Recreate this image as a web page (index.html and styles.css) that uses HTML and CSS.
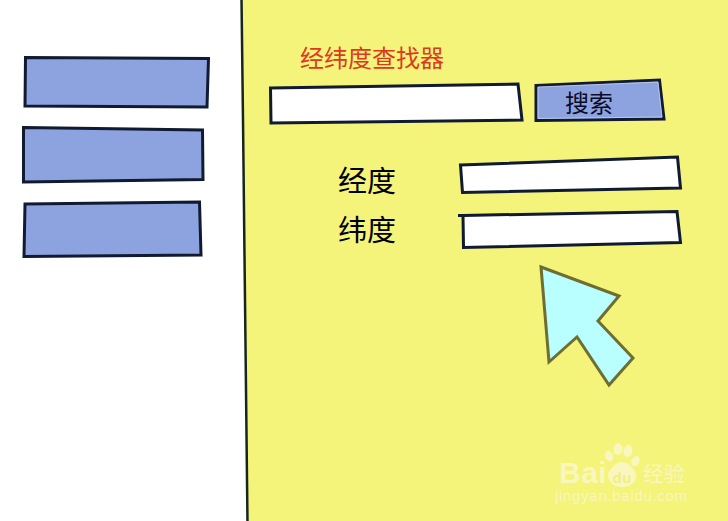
FILE: index.html
```html
<!DOCTYPE html>
<html lang="zh-CN">
<head>
<meta charset="utf-8">
<title>经纬度查找器</title>
<link rel="stylesheet" href="styles.css">
</head>
<body>
<svg class="sketch" viewBox="0 0 728 521" width="728" height="521" xmlns="http://www.w3.org/2000/svg">
  <polygon class="panel" points="241,0 728,0 728,521 247,521"/>
  <path class="divider" d="M241.500,-2 L243,120 L245,300 L247.500,523"/>

  <polygon class="box nav" points="25.500,57.500 208.500,58.500 207,107 25,106"/>
  <polygon class="box nav" points="23.500,127.500 202.500,130 203,179.500 23.500,182"/>
  <polygon class="box nav" points="25,204 199.500,202 201,255 24,256.500"/>

  <text class="title" x="300" y="67">经纬度查找器</text>

  <polygon class="box field" points="270.500,88 518,84 522,120 271,123"/>
  <polygon class="box nav" points="536,85.500 659.500,80 664,119 536,120.500"/>
  <polygon class="sheen" points="538,87 658,82 662,117 538,118.500"/>
  <text class="btn" x="565" y="112">搜索</text>

  <text class="label" x="338" y="192">经度</text>
  <polygon class="box field" points="460.500,165 677.500,157 680.500,188 462.500,192.500"/>
  <text class="label" x="338" y="241">纬度</text>
  <path class="box field" d="M458,215.500 L463,215.500 L677,211.500 L680.500,242.500 L463.500,247.500 L463,215.500"/>

  <polygon class="cursor" points="541,267 619,296 598,321 633,358 609,385 577,337 549,362"/>

  <g class="mark">
    <text class="mark-bai" x="559" y="483">Bai</text>
    <path d="M608,475 C608,470 616,462 622,462 C628,462 636,470 636,476 C636,483 630,487 622,487 C614,487 608,482 608,475 Z"/>
    <ellipse cx="609" cy="456" rx="4" ry="5.500" transform="rotate(-25 609 456)"/>
    <ellipse cx="618" cy="449" rx="4.500" ry="6"/>
    <ellipse cx="628" cy="451" rx="4.500" ry="6" transform="rotate(10 628 451)"/>
    <ellipse cx="635.500" cy="461" rx="4" ry="5.500" transform="rotate(25 635.500 461)"/>
    <text class="mark-du" x="612.500" y="483">du</text>
    <text class="mark-cn" x="643" y="481">经验</text>
    <text class="mark-url" x="555" y="501">jingyan.baidu.com</text>
  </g>
</svg>
</body>
</html>
```
FILE: styles.css
```css
html, body {
  margin: 0;
  padding: 0;
  background: #ffffff;
  overflow: hidden;
}
.sketch {
  display: block;
}
.panel {
  fill: #f4f37a;
}
.divider {
  fill: none;
  stroke: #16261f;
  stroke-width: 2.500;
}
.box {
  stroke: #101a30;
  stroke-width: 3;
  stroke-linejoin: miter;
}
.nav {
  fill: #8da3e0;
}
.field {
  fill: #ffffff;
}
.sheen {
  fill: none;
  stroke: #c6d2f2;
  stroke-width: 0.800;
}
.cursor {
  fill: #b9ffff;
  stroke: #6f6e32;
  stroke-width: 3;
}
text {
  font-family: "Noto Sans CJK SC", "Noto Sans", sans-serif;
}
.title {
  font-size: 24px;
  fill: #dc3a1e;
}
.btn {
  font-size: 24px;
  fill: #0a0c26;
}
.label {
  font-size: 29px;
  fill: #000000;
}
.mark {
  fill: #f9f7bd;
}
.mark-bai {
  font-family: "Liberation Sans", sans-serif;
  font-size: 30px;
  font-weight: 700;
  letter-spacing: 0.500px;
  fill: #f9f7bd;
}
.mark-du {
  font-family: "Liberation Sans", sans-serif;
  font-size: 15px;
  font-weight: 700;
  letter-spacing: 0.500px;
  fill: #f0ee85;
}
.mark-cn {
  font-size: 21px;
  fill: #f9f7bd;
}
.mark-url {
  font-family: "Liberation Sans", sans-serif;
  font-size: 15px;
  letter-spacing: 0.700px;
  fill: #f9f7bd;
}
```
